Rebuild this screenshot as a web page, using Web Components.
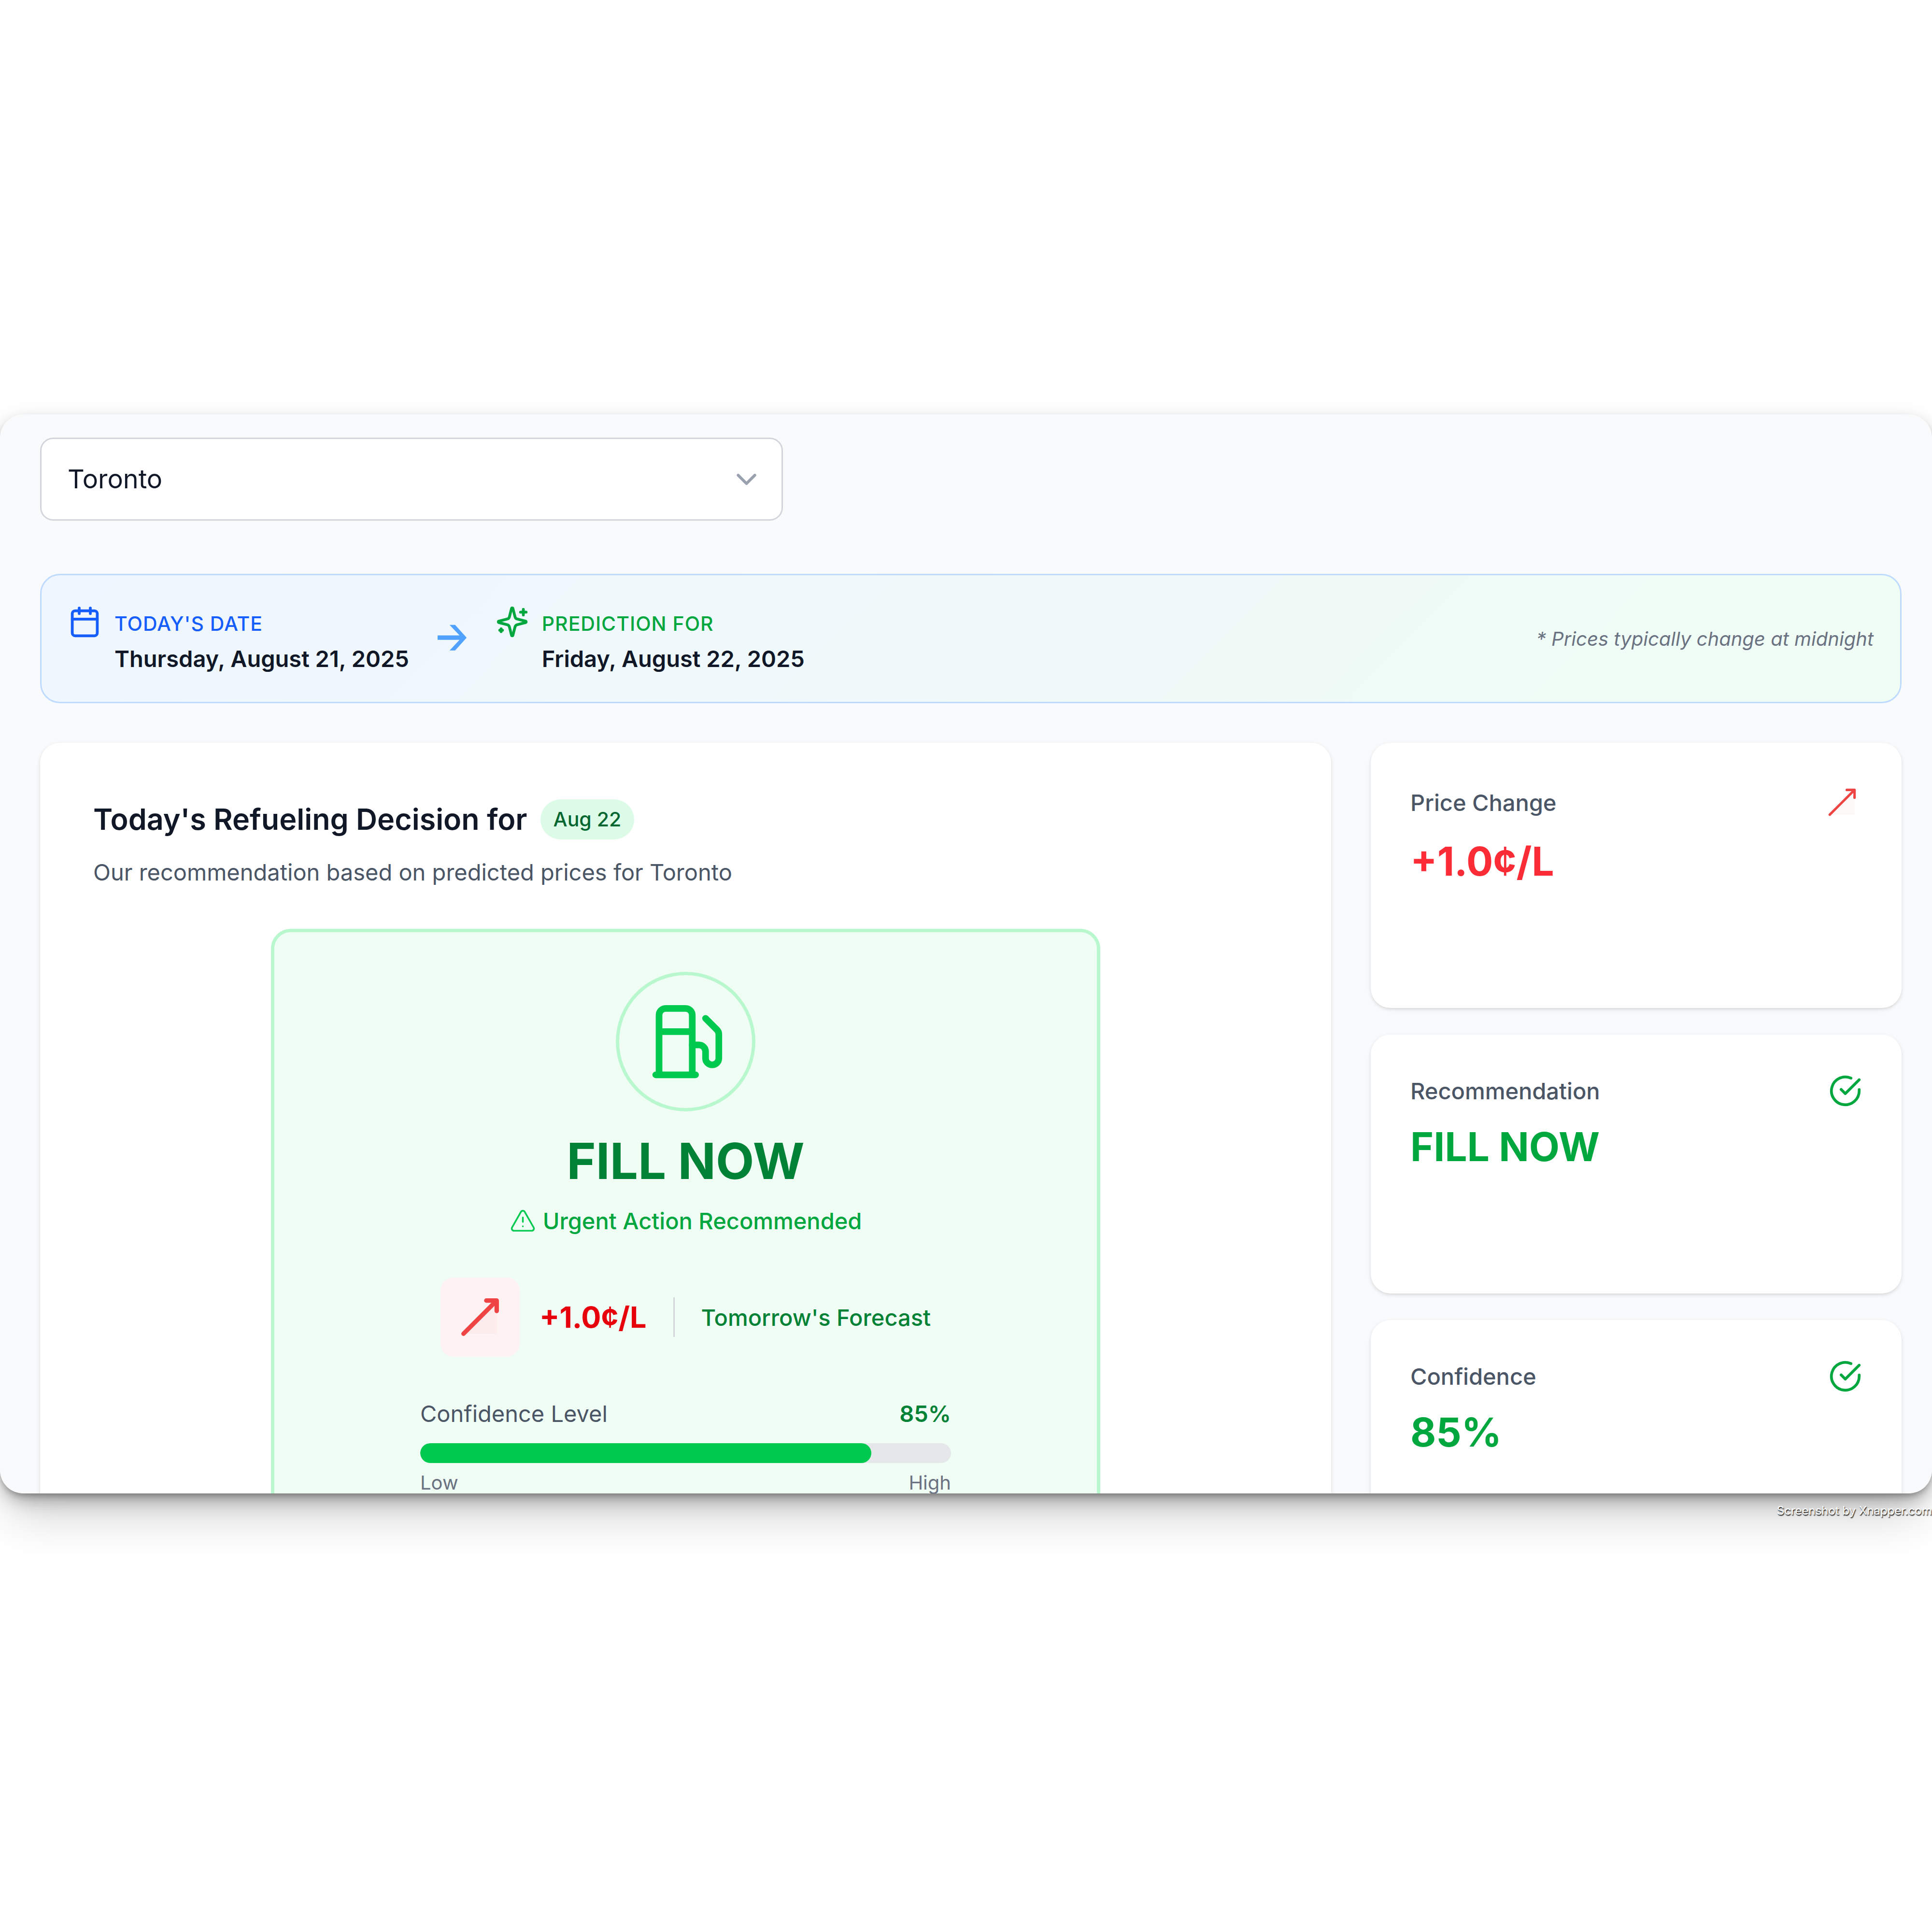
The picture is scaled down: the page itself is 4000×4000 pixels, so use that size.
<!DOCTYPE html>
<html lang="en">
<head>
<meta charset="utf-8">
<title>Fuel price forecast</title>
<style>
  body { margin: 0; background: #fff; font-family: Inter, "Liberation Sans", sans-serif; color: #101828; }
</style>
</head>
<body>
<fuel-app></fuel-app>
<script>
const ICONS = {
  calendar: '<path d="M8 2v4M16 2v4M3 10h18"/><rect width="18" height="18" x="3" y="4" rx="2"/>',
  sparkles: '<path d="M9.937 15.5A2 2 0 0 0 8.5 14.063l-6.135-1.582a.5.5 0 0 1 0-.962L8.5 9.936A2 2 0 0 0 9.937 8.5l1.582-6.135a.5.5 0 0 1 .963 0L14.063 8.5A2 2 0 0 0 15.5 9.937l6.135 1.581a.5.5 0 0 1 0 .964L15.5 14.063a2 2 0 0 0-1.437 1.437l-1.582 6.135a.5.5 0 0 1-.963 0z"/><path d="M20 3v4M22 5h-4M4 17v2M5 18H3"/>',
  arrow: '<path d="M1.4 9.6h15.8L10 2h4l8.300 9.200-8.300 9.200h-4l7.200-7.600H1.400z" fill="currentColor" stroke="none"/>',
  fuel: '<path d="M3 22h12M4 9h10M14 22V4a2 2 0 0 0-2-2H6a2 2 0 0 0-2 2v18"/><path d="M14 13h2a2 2 0 0 1 2 2v2a2 2 0 0 0 4 0V9.830a2 2 0 0 0-.59-1.420L18 5"/>',
  alert: '<path d="m21.730 18-8-14a2 2 0 0 0-3.480 0l-8 14A2 2 0 0 0 4 21h16a2 2 0 0 0 1.730-3M12 9v4M12 17h.01"/>',
  check: '<path d="M22 11.080V12a10 10 0 1 1-5.930-9.140"/><path d="M22 4 12 14.010l-3-3"/>',
  trend: '<path d="M4.5 19.5 19.5 4.5v15z" fill="currentColor" opacity=".03" stroke="none"/><path d="m4.500 19.500 15-15M14.800 4.500h4.700v4.700"/>',
  chevron: '<path d="m6 9 6 6 6-6"/>'
};

class UiIcon extends HTMLElement {
  connectedCallback() {
    this.attachShadow({ mode: 'open' }).innerHTML = `
      <style>
        :host { display: block; flex: none; width: var(--size, 69px); height: var(--size, 69px); }
        svg { display: block; width: 100%; height: 100%; overflow: visible; }
      </style>
      <svg viewBox="0 0 24 24" fill="none" stroke="currentColor" stroke-width="${this.getAttribute('weight') || 2}"
        stroke-linecap="round" stroke-linejoin="round" aria-hidden="true">${ICONS[this.getAttribute('name')]}</svg>`;
  }
}
customElements.define('ui-icon', UiIcon);

class CitySelect extends HTMLElement {
  connectedCallback() {
    this.attachShadow({ mode: 'open' }).innerHTML = `
      <style>
        :host { display: grid; max-width: 1538px; align-items: center; }
        select { grid-area: 1 / 1; appearance: none; box-sizing: border-box; width: 100%; height: 172px; margin: 0;
          padding: 0 165px 0 54px; border: 3px solid #d1d5dc; border-radius: 27px; background: #fff;
          color: #101828; font: 400 54px/82px Inter, "Liberation Sans", sans-serif; }
        ui-icon { grid-area: 1 / 1; justify-self: end; margin-right: 41px; color: #99a1af; pointer-events: none; }
      </style>
      <select aria-label="City"><option>Toronto</option></select>
      <ui-icon name="chevron"></ui-icon>`;
  }
}
customElements.define('city-select', CitySelect);

class DateStamp extends HTMLElement {
  connectedCallback() {
    this.attachShadow({ mode: 'open' }).innerHTML = `
      <style>
        :host { display: flex; gap: 27px; align-items: flex-start; }
        ui-icon { margin-top: 7px; color: var(--tone); }
        div { display: grid; gap: 10px; padding-top: 18px; white-space: nowrap; }
        .label { font: 500 41px/55px Inter, sans-serif; letter-spacing: 1px; text-transform: uppercase; color: var(--tone); }
        .date { font: 600 47px/69px Inter, sans-serif; }
      </style>
      <ui-icon name="${this.getAttribute('icon')}"></ui-icon>
      <div><span class="label">${this.getAttribute('label')}</span><span class="date"><slot></slot></span></div>`;
  }
}
customElements.define('date-stamp', DateStamp);

class DateBanner extends HTMLElement {
  connectedCallback() {
    this.attachShadow({ mode: 'open' }).innerHTML = `
      <style>
        :host { display: flex; align-items: center; justify-content: space-between; gap: 55px; padding: 55px;
          border: 3px solid #bedbff; border-radius: 41px; background: linear-gradient(135deg, #eff6ff, #f0fdf4); }
        .dates { display: flex; align-items: center; gap: 55px; }
        .arrow { color: #51a2ff; }
        .today { --tone: #155dfc; }
        .next { --tone: #00a63e; }
        em { font: italic 400 40px/55px Inter, sans-serif; color: #6a7282; white-space: nowrap; }
      </style>
      <div class="dates">
        <date-stamp class="today" icon="calendar" label="Today's date">Thursday, August 21, 2025</date-stamp>
        <ui-icon class="arrow" name="arrow"></ui-icon>
        <date-stamp class="next" icon="sparkles" label="Prediction for">Friday, August 22, 2025</date-stamp>
      </div>
      <em>* Prices typically change at midnight</em>`;
  }
}
customElements.define('date-banner', DateBanner);

class StatCard extends HTMLElement {
  connectedCallback() {
    this.attachShadow({ mode: 'open' }).innerHTML = `
      <style>
        :host { display: block; padding: 82px 82px 248px; border-radius: 41px; background: #fff;
          box-shadow: 0 3px 10px rgba(0,0,0,.1), 0 3px 7px -3px rgba(0,0,0,.1); }
        header { display: flex; justify-content: space-between; align-items: center; }
        h3 { margin: 0; font: 500 47px/69px Inter, sans-serif; color: #4a5565; }
        p { margin: 27px 0 0; font: 700 82px/110px Inter, sans-serif; color: var(--tone); }
        ui-icon { color: var(--icon-tone, var(--tone)); }
      </style>
      <header><h3>${this.getAttribute('label')}</h3>
        <ui-icon name="${this.getAttribute('icon')}" weight="${this.getAttribute('weight') || 2}"></ui-icon></header>
      <p><slot></slot></p>`;
  }
}
customElements.define('stat-card', StatCard);

class ConfidenceMeter extends HTMLElement {
  connectedCallback() {
    const v = this.getAttribute('value');
    this.attachShadow({ mode: 'open' }).innerHTML = `
      <style>
        :host { display: block; width: 100%; max-width: 1099px; }
        div { display: flex; justify-content: space-between; }
        .head { font: 400 47px/69px Inter, sans-serif; color: #4a5565; }
        .head strong { font-weight: 600; color: #008236; }
        .track { height: 41px; margin: 27px 0 18px; border-radius: 21px; background: #e5e7eb; overflow: hidden; }
        .fill { width: ${v}%; border-radius: 21px; background: #00c950; }
        .scale { font: 400 40px/46px Inter, sans-serif; color: #6a7282; }
      </style>
      <div class="head"><span>Confidence Level</span><strong>${v}%</strong></div>
      <div class="track" role="img" aria-label="Confidence"><div class="fill"></div></div>
      <div class="scale"><span>Low</span><span>High</span></div>`;
  }
}
customElements.define('confidence-meter', ConfidenceMeter);

class DecisionCard extends HTMLElement {
  connectedCallback() {
    this.attachShadow({ mode: 'open' }).innerHTML = `
      <style>
        :host { display: block; padding: 110px; border-radius: 41px; background: #fff;
          box-shadow: 0 3px 10px rgba(0,0,0,.1), 0 3px 7px -3px rgba(0,0,0,.1); }
        header { display: flex; align-items: center; gap: 27px; }
        h2 { margin: 0; font: 600 61px/96px Inter, sans-serif; }
        .badge { padding: 14px 27px; border-radius: 42px; background: #dcfce7; color: #016630; font: 500 41px/55px Inter, sans-serif; }
        .sub { margin: 27px 0 83px; font: 400 47px/69px Inter, sans-serif; color: #4a5565; }
        .panel { box-sizing: border-box; width: 70%; margin: 0 auto; padding: 82px; border: 7px solid #b9f8cf;
          border-radius: 41px; background: #f0fdf4; display: flex; flex-direction: column; align-items: center; }
        .ring { padding: 55px; border: 7px solid #b9f8cf; border-radius: 50%; color: #00c950; --size: 165px; }
        h1 { margin: 41px 0 27px; font: 700 103px/124px Inter, sans-serif; color: #008236; }
        .urgent { display: flex; align-items: center; gap: 14px; font: 500 47px/69px Inter, sans-serif; color: #00a63e; }
        .urgent ui-icon { --size: 55px; color: #00c950; }
        .move { display: flex; align-items: center; gap: 41px; margin: 83px 0; }
        .tile { padding: 27px; border-radius: 27px; background: #fef2f2; color: #ef4444; --size: 110px; }
        .figures { display: flex; align-items: center; gap: 55px; }
        .price { font: 700 61px/96px Inter, sans-serif; color: #e7000b; }
        .rule { width: 3px; height: 82px; background: #d1d5dc; }
        .when { font: 500 47px/69px Inter, sans-serif; color: #008236; }
      </style>
      <header><h2>Today's Refueling Decision for</h2><span class="badge">Aug 22</span></header>
      <p class="sub">Our recommendation based on predicted prices for Toronto</p>
      <section class="panel">
        <div class="ring"><ui-icon name="fuel"></ui-icon></div>
        <h1>FILL NOW</h1>
        <div class="urgent"><ui-icon name="alert" weight="1.5"></ui-icon><span>Urgent Action Recommended</span></div>
        <div class="move">
          <div class="tile"><ui-icon name="trend" weight="2"></ui-icon></div>
          <div class="figures"><span class="price">+1.0¢/L</span><span class="rule"></span><span class="when">Tomorrow's Forecast</span></div>
        </div>
        <confidence-meter value="85"></confidence-meter>
      </section>`;
  }
}
customElements.define('decision-card', DecisionCard);

class FuelApp extends HTMLElement {
  connectedCallback() {
    this.attachShadow({ mode: 'open' }).innerHTML = `
      <style>
        :host { display: flex; flex-direction: column; box-sizing: border-box; height: 100vh; padding: 858px 0 856px; overflow: hidden; }
        main { box-sizing: border-box; flex: 1; min-height: 0; overflow: hidden; padding: 48px 63px 0 83px;
          border-radius: 48px; background: #f9fafb;
          box-shadow: 0 0 40px rgba(0,0,0,.06), 0 7px 14px -4px rgba(0,0,0,.3),
            0 20px 40px -10px rgba(0,0,0,.3), 0 60px 100px -20px rgba(0,0,0,.2); }
        date-banner { margin: 110px 0 82px; }
        .grid { display: grid; grid-template-columns: minmax(0, 1fr) 1099px; gap: 82px; }
        aside { display: flex; flex-direction: column; gap: 55px; }
        .up { --tone: #fb2c36; --icon-tone: #ef4444; --size: 82px; }
        .ok { --tone: #00a63e; }
        footer { padding-top: 20px; text-align: right; font: 400 24px/32px Inter, sans-serif; color: #fff; text-shadow: 1px 2px 2px #000; }
      </style>
      <main>
        <city-select></city-select>
        <date-banner></date-banner>
        <div class="grid">
          <decision-card></decision-card>
          <aside>
            <stat-card class="up" label="Price Change" icon="trend" weight="1.5">+1.0¢/L</stat-card>
            <stat-card class="ok" label="Recommendation" icon="check">FILL NOW</stat-card>
            <stat-card class="ok" label="Confidence" icon="check">85%</stat-card>
          </aside>
        </div>
      </main>
      <footer>Screenshot by Xnapper.com</footer>`;
  }
}
customElements.define('fuel-app', FuelApp);
</script>
</body>
</html>
